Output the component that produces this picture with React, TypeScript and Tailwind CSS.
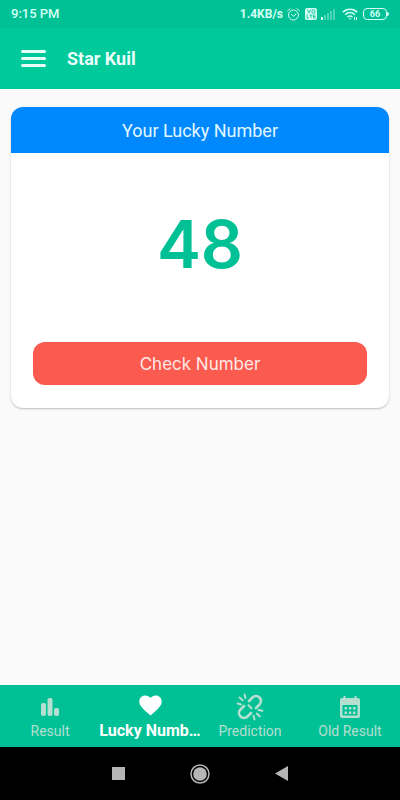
import type { ReactNode } from "react";

type Tab = {
  label: string;
  icon: ReactNode;
  active?: boolean;
};

function ResultIcon() {
  return (
    <svg className="w-[18px] h-[18px]" viewBox="0 0 18 18" fill="currentColor">
      <rect x="0" y="5" width="5" height="13" rx="2" />
      <rect x="6.5" y="0" width="5" height="18" rx="2" />
      <rect x="13" y="10" width="5" height="8" rx="2" />
    </svg>
  );
}

function HeartIcon() {
  return (
    <svg className="w-[23px] h-[21px]" viewBox="0 0 23 21" fill="currentColor">
      <path d="M11.5 20.5 9.9 19.1C4 13.7.3 10.5.3 6.4.3 3 2.9.4 6.3.4c2 0 3.9.9 5.2 2.4C12.8 1.3 14.7.4 16.7.4c3.4 0 6 2.6 6 6 0 4.1-3.7 7.3-9.6 12.7z" />
    </svg>
  );
}

function BrokenLinkIcon() {
  return (
    <svg
      className="w-7 h-7"
      viewBox="0 0 28 28"
      fill="none"
      stroke="currentColor"
      strokeLinecap="round"
    >
      <path
        d="M13 8 16.5 4.500a4.900 4.900 0 0 1 7 7L20 15M8 13 4.500 16.500a4.900 4.900 0 0 0 7 7L15 20"
        strokeWidth="2.6"
      />
      <path
        d="M8.5 1.500l1 3.500M3.500 4.500l3.200 2.700M1.500 10.500l3.500 1M12.500 12.200l3 3M22.500 17l4 .8M20.800 20.500l3 2.800M17.500 22.800l1 3.700"
        strokeWidth="2"
      />
    </svg>
  );
}

function CalendarIcon() {
  return (
    <svg className="w-5 h-[22px]" viewBox="0 0 20 22" fill="currentColor">
      <path
        fillRule="evenodd"
        d="M3.5 0h2v2h9V0h2v2H18a2 2 0 0 1 2 2v16a2 2 0 0 1-2 2H2a2 2 0 0 1-2-2V4a2 2 0 0 1 2-2h1.500zM2.500 9v10.500h15V9z"
      />
      <path d="M4.500 11H7v2.500H4.500zM8.800 11h2.500v2.500H8.800zM13 11h2.500v2.500H13zM4.500 15.500H7V18H4.500zM8.800 15.500h2.500V18H8.800zM13 15.500h2.500V18H13z" />
    </svg>
  );
}

function StatusBar() {
  return (
    <div className="flex h-7 items-center justify-between bg-[#00c196] px-[11px] text-[#d5fff4]">
      <span className="text-[13px] font-medium">9:15 PM</span>
      <div className="flex items-center gap-1">
        <span className="text-xs font-bold">1.4KB/s</span>
        {/* Alarm */}
        <svg className="h-[13px] w-[13px]" viewBox="0 0 13 13" fill="none" stroke="currentColor" strokeLinecap="round">
          <circle cx="6.5" cy="7" r="5" />
          <path d="M.7 2.7 3 .9M12.300 2.700 10 .9M4.500 6.500l2 1.700 2.500-2" />
        </svg>
        {/* VoLTE and signal */}
        <svg className="ml-px h-3 w-8" viewBox="0 0 32 12" fill="currentColor">
          <rect width="12" height="12" rx="2" />
          <path
            d="M2.500 1.500 4 5 5.500 1.500M7 2h3v3H7zM2 6.500V10h2M4.500 7h3M6 7v3M10.500 7h-2v3h2M8.500 8.500h2"
            fill="none"
            stroke="#00c196"
            strokeWidth=".8"
          />
          <rect x="16" y="9" width="2" height="3" />
          <g opacity=".35">
            <rect x="19" y="7" width="2" height="5" />
            <rect x="22" y="5" width="2" height="7" />
            <rect x="25" y="3" width="2" height="9" />
            <rect x="28" y="1" width="2" height="11" />
          </g>
        </svg>
        {/* Wi-Fi */}
        <svg className="ml-px h-3 w-4" viewBox="0 0 16 12" fill="none" stroke="currentColor" strokeWidth="1.5">
          <path d="M.8 4.200a10 10 0 0 1 14.400 0M3.200 6.700a6.500 6.500 0 0 1 9.600 0M5.500 9a3.500 3.500 0 0 1 5 0" />
          <path d="M6.500 10.200h3L8 11.800z" fill="currentColor" stroke="none" />
          <path d="M12.500 9v3M14.500 9v3" strokeWidth="1" />
        </svg>
        {/* Battery */}
        <div className="flex items-center pl-px">
          <span className="flex h-3 w-6 items-center justify-center rounded border border-current text-[9px] font-bold leading-none">
            66
          </span>
          <span className="h-1 w-0.5 rounded-r bg-current" />
        </div>
      </div>
    </div>
  );
}

const tabs: Tab[] = [
  { label: "Result", icon: <ResultIcon /> },
  { label: "Lucky Numb…", icon: <HeartIcon />, active: true },
  { label: "Prediction", icon: <BrokenLinkIcon /> },
  { label: "Old Result", icon: <CalendarIcon /> },
];

export default function App() {
  return (
    <div className="flex min-h-screen flex-col bg-[#fafafa] font-['Roboto',sans-serif]">
      <StatusBar />

      <header className="flex h-[61px] items-center gap-5 bg-[#00c99c] px-5 text-[#eafffa]">
        <button type="button" aria-label="Menu" className="flex w-[27px] flex-col gap-1 px-px">
          <span className="h-[3px] rounded-full bg-current" />
          <span className="h-[3px] rounded-full bg-current" />
          <span className="h-[3px] rounded-full bg-current" />
        </button>
        <h1 className="text-lg font-bold">Star Kuil</h1>
      </header>

      <main className="flex-1 px-[11px] py-[18px]">
        <section className="overflow-hidden rounded-xl bg-white shadow-[0_1px_2px_rgba(0,0,0,0.25)]">
          <h2 className="bg-[#0088ff] pb-2 pt-[10px] text-center text-lg leading-7 text-[#e0f7ff]">
            Your Lucky Number
          </h2>
          <div className="px-[22px] pb-[23px] pt-14">
            <p className="text-center font-['Inter',sans-serif] text-[66px] font-semibold leading-[70px] text-[#00c196]">
              48
            </p>
            <button
              type="button"
              className="mt-[63px] h-[43px] w-full rounded-xl bg-[#fb5a4e] pt-0.5 font-['Inter',sans-serif] text-[17px] text-[#ffe9e7]"
            >
              Check Number
            </button>
          </div>
        </section>
      </main>

      <nav className="grid h-[62px] grid-cols-4 bg-[#00c196]">
        {tabs.map((tab) => (
          <button
            key={tab.label}
            type="button"
            className={
              tab.active
                ? "flex min-w-0 flex-col items-center pt-1.5 text-white"
                : "flex min-w-0 flex-col items-center pt-2 text-[#b4dfd1]"
            }
          >
            <span className="flex h-7 items-center">{tab.icon}</span>
            <span
              className={
                tab.active
                  ? "whitespace-nowrap text-base leading-6 font-bold"
                  : "text-sm leading-5"
              }
            >
              {tab.label}
            </span>
          </button>
        ))}
      </nav>

      {/* System navigation */}
      <div className="flex h-[53px] items-center justify-center gap-[65px] bg-black text-[#b5b5b5]">
        <button type="button" aria-label="Recent apps" className="h-[13px] w-[13px] bg-current" />
        <button type="button" aria-label="Home">
          <svg className="h-5 w-5" viewBox="0 0 20 20">
            <circle cx="10" cy="10" r="9" fill="none" stroke="currentColor" strokeWidth="1.5" />
            <circle cx="10" cy="10" r="6.8" fill="currentColor" />
          </svg>
        </button>
        <button type="button" aria-label="Back">
          <svg className="h-[15px] w-[13px]" viewBox="0 0 13 15" fill="currentColor">
            <path d="M0 7.500 13 0v15z" />
          </svg>
        </button>
      </div>
    </div>
  );
}
